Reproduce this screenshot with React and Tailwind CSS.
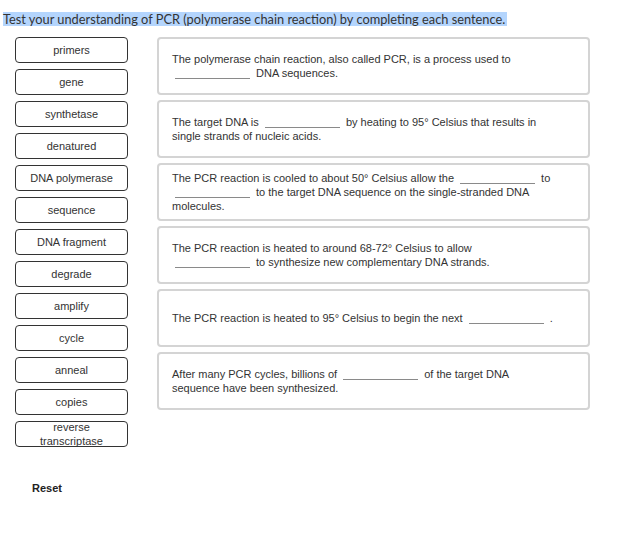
import { useState } from "react";

const WORDS = [
  "primers",
  "gene",
  "synthetase",
  "denatured",
  "DNA polymerase",
  "sequence",
  "DNA fragment",
  "degrade",
  "amplify",
  "cycle",
  "anneal",
  "copies",
  "reverse transcriptase",
];

function Blank() {
  return <span className="inline-block w-[75px] mx-[3px] border-b border-[#8a8a8a] align-[-2px]"></span>;
}

function Card({ children }) {
  return (
    <div className="h-[58px] border-2 border-[#d4d4d4] rounded-[4px] flex items-center pl-[13px] text-[11px] leading-[14px] text-[#333]">
      <p>{children}</p>
    </div>
  );
}

export default function App() {
  const [picked, setPicked] = useState(null);

  return (
    <div className="w-[642px] h-[538px] bg-white font-['Liberation_Sans',Arial,sans-serif]">
      {/* Prompt */}
      <div className="pt-[12px] pl-[3px] h-[26px] text-[12.8px] leading-[14px]">
        <span className="inline-block h-[14px] leading-[14px] bg-[#b4d5fd] text-[#333] font-['Lato',sans-serif] pr-[2px] align-top">
          Test your understanding of PCR (polymerase chain reaction) by completing each sentence.
        </span>
      </div>

      <div className="flex mt-[11px] pl-[15px]">
        {/* Word bank */}
        <div className="w-[113px] flex flex-col">
          <div className="flex flex-col gap-[6px]">
            {WORDS.map((w) => (
              <button
                key={w}
                onClick={() => setPicked(w)}
                className={`h-[26px] w-[113px] border rounded-[4px] flex items-center justify-center px-[8px] text-[11px] leading-[14px] text-[#333] bg-white ${
                  picked === w ? "border-[#1a73e8]" : "border-[#333]"
                }`}
              >
                {w}
              </button>
            ))}
          </div>
          <button
            onClick={() => setPicked(null)}
            className="self-start ml-[17px] mt-[34px] text-[11px] leading-[14px] font-bold text-[#222]"
          >
            Reset
          </button>
        </div>

        {/* Sentences */}
        <div className="w-[433px] ml-[29px] flex flex-col gap-[5px]">
          <Card>
            The polymerase chain reaction, also called PCR, is a process used to
            <br />
            <Blank /> DNA sequences.
          </Card>
          <Card>
            The target DNA is <Blank /> by heating to 95° Celsius that results in
            <br />
            single strands of nucleic acids.
          </Card>
          <Card>
            The PCR reaction is cooled to about 50° Celsius allow the <Blank /> to
            <br />
            <Blank /> to the target DNA sequence on the single-stranded DNA
            <br />
            molecules.
          </Card>
          <Card>
            The PCR reaction is heated to around 68-72° Celsius to allow
            <br />
            <Blank /> to synthesize new complementary DNA strands.
          </Card>
          <Card>
            The PCR reaction is heated to 95° Celsius to begin the next <Blank /> .
          </Card>
          <Card>
            After many PCR cycles, billions of <Blank /> of the target DNA
            <br />
            sequence have been synthesized.
          </Card>
        </div>
      </div>
    </div>
  );
}
